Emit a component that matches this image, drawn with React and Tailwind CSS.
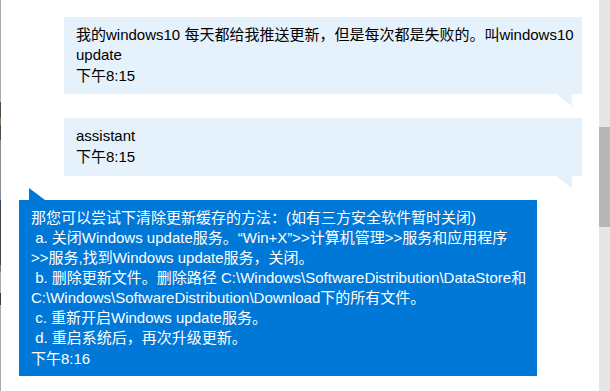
export default function App() {
  const font = { fontFamily: '"Liberation Sans", "Noto Sans CJK SC", sans-serif' };

  const blueLines = [
    '那您可以尝试下清除更新缓存的方法：(如有三方安全软件暂时关闭)',
    ' a. 关闭Windows update服务。“Win+X”>>计算机管理>>服务和应用程序',
    '>>服务,找到Windows update服务，关闭。',
    ' b. 删除更新文件。删除路径 C:\\Windows\\SoftwareDistribution\\DataStore和',
    'C:\\Windows\\SoftwareDistribution\\Download下的所有文件。',
    ' c. 重新开启Windows update服务。',
    ' d. 重启系统后，再次升级更新。',
  ];

  return (
    <div className="flex w-[610px] h-[391px] bg-white overflow-hidden" style={font}>
      {/* edge of the window behind */}
      <div className="flex flex-col w-px shrink-0">
        <div className="h-[102px] bg-[#acacac]" />
        <div className="h-[16px] bg-[#4b4b4b]" />
        <div className="h-[7px] bg-[#8a7862]" />
        <div className="h-[15px] bg-[#4b4b4b]" />
        <div className="h-[55px] bg-[#8e8e8e]" />
        <div className="h-[5px] bg-[#5c8fc2]" />
        <div className="h-[65px] bg-[#444444]" />
        <div className="h-[7px] bg-[#7a7a7a]" />
        <div className="h-[21px] bg-[#acacac]" />
        <div className="h-[12px] bg-[#3a3a3a]" />
        <div className="flex-1 bg-[#acacac]" />
      </div>

      <div className="flex-1 flex flex-col pt-[17px] text-[15px] leading-[20px]">
        {/* user message */}
        <div className="flex flex-col items-end pr-[17px]">
          <div className="w-[518px] bg-[#e5f1fb] text-black pl-3 pt-2 pb-2 whitespace-pre">
            <div>我的windows10 每天都给我推送更新，但是每次都是失败的。叫windows10</div>
            <div>update</div>
            <div className="mt-px">下午8:15</div>
          </div>
          <div className="pr-[10px]">
            <svg width="16" height="12" viewBox="0 0 16 12" className="block">
              <polygon points="0,0 16,0 16,12" fill="#e5f1fb" />
            </svg>
          </div>
        </div>

        <div className="flex flex-col items-end pr-[17px] mt-3">
          <div className="w-[518px] bg-[#e5f1fb] text-black pl-3 pt-2 pb-[9px]">
            <div>assistant</div>
            <div className="mt-px">下午8:15</div>
          </div>
          <div className="pr-[10px]">
            <svg width="16" height="12" viewBox="0 0 16 12" className="block">
              <polygon points="0,0 16,0 16,12" fill="#e5f1fb" />
            </svg>
          </div>
        </div>

        {/* assistant reply */}
        <div className="flex flex-col items-start pl-[18px]">
          <div className="pl-[10px]">
            <svg width="16" height="12" viewBox="0 0 16 12" className="block">
              <polygon points="0,0 0,12 16,12" fill="#0078d7" />
            </svg>
          </div>
          <div className="w-[518px] bg-[#0078d7] text-white pl-3 pt-2 pb-[7px]">
            {blueLines.map((line, i) => (
              <div key={i} className="whitespace-pre">{line}</div>
            ))}
            <div className="mt-px">下午8:16</div>
          </div>
        </div>
      </div>

      {/* scrollbar */}
      <div className="flex flex-col w-[11px] shrink-0 bg-[#e6e6e6]">
        <div className="h-[127px]" />
        <div className="h-[100px] bg-[#b7b7b7]" />
      </div>
    </div>
  );
}
